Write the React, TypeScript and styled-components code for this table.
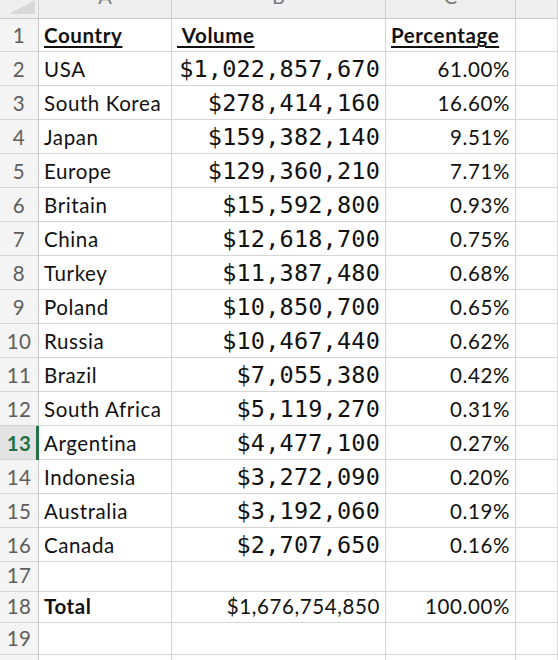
import React from "react";
import styled, { createGlobalStyle, css } from "styled-components";

const Global = createGlobalStyle`
  html, body { margin: 0; padding: 0; background: #fff; }
  body { overflow: hidden; }
`;

const COLS = "39px 133px 214px 130px 1fr";

const Sheet = styled.div`
  width: 558px;
  height: 660px;
  overflow: hidden;
  display: flex;
  flex-direction: column;
  font-family: Lato, "Liberation Sans", sans-serif;
  color: #111;
`;

const Row = styled.div<{ $h: number }>`
  display: grid;
  grid-template-columns: ${COLS};
  height: ${(p) => p.$h}px;
  flex: none;
`;

const Cell = styled.div<{ $align?: "left" | "right" | "center" }>`
  box-sizing: border-box;
  border-right: 1px solid #d5d5d5;
  border-bottom: 1px solid #d5d5d5;
  display: flex;
  align-items: flex-end;
  justify-content: ${(p) =>
    p.$align === "right" ? "flex-end" : p.$align === "center" ? "center" : "flex-start"};
  padding: 0 5px 6px 5px;
  overflow: hidden;
  white-space: nowrap;
  font-size: 20.5px;
  letter-spacing: 0.6px;
  line-height: 20px;
`;

const ColHead = styled.div`
  box-sizing: border-box;
  background: #efefef;
  border-right: 1px solid #cfcfcf;
  border-bottom: 1px solid #c9c9c9;
  display: flex;
  justify-content: center;
  align-items: flex-end;
  overflow: hidden;
  font-size: 20px;
  color: #7a7a7a;
  line-height: 20px;
  padding-bottom: 12px;
`;

const Corner = styled(ColHead)`
  position: relative;
  &::after {
    content: "";
    position: absolute;
    right: 3px;
    top: 0;
    width: 26px;
    height: 14px;
    background: #d8d8d8;
    clip-path: polygon(100% 0, 100% 100%, 0 100%);
  }
`;

const RowHead = styled.div<{ $active?: boolean }>`
  box-sizing: border-box;
  position: relative;
  background: ${(p) => (p.$active ? "#e3e3e3" : "#f4f4f4")};
  border-right: 1px solid #c6c6c6;
  border-bottom: 1px solid #d5d5d5;
  display: flex;
  justify-content: center;
  align-items: flex-end;
  padding-bottom: 6px;
  font-size: 20.5px;
  letter-spacing: 0.4px;
  line-height: 20px;
  color: #5e5e5e;
  ${(p) =>
    p.$active &&
    css`
      color: #217346;
      font-weight: 700;
      &::after {
        content: "";
        position: absolute;
        right: -1px;
        top: 0;
        bottom: -1px;
        width: 3px;
        background: #217346;
      }
    `}
`;

const Heading = styled.span`
  font-weight: 700;
  text-decoration: underline;
  text-decoration-thickness: 2px;
  text-underline-offset: 3px;
  white-space: pre;
`;

const Money = styled.span`
  font-family: "DejaVu Sans Mono", "Liberation Mono", monospace;
  font-size: 23.5px;
  letter-spacing: 0.2px;
`;

const Bold = styled.span`
  font-weight: 700;
`;

type Item = [string, string, string];

const data: Item[] = [
  ["USA", "$1,022,857,670", "61.00%"],
  ["South Korea", "$278,414,160", "16.60%"],
  ["Japan", "$159,382,140", "9.51%"],
  ["Europe", "$129,360,210", "7.71%"],
  ["Britain", "$15,592,800", "0.93%"],
  ["China", "$12,618,700", "0.75%"],
  ["Turkey", "$11,387,480", "0.68%"],
  ["Poland", "$10,850,700", "0.65%"],
  ["Russia", "$10,467,440", "0.62%"],
  ["Brazil", "$7,055,380", "0.42%"],
  ["South Africa", "$5,119,270", "0.31%"],
  ["Argentina", "$4,477,100", "0.27%"],
  ["Indonesia", "$3,272,090", "0.20%"],
  ["Australia", "$3,192,060", "0.19%"],
  ["Canada", "$2,707,650", "0.16%"],
];

export default function App() {
  return (
    <Sheet>
      <Global />
      <Row $h={19}>
        <Corner />
        <ColHead>A</ColHead>
        <ColHead>B</ColHead>
        <ColHead>C</ColHead>
        <ColHead />
      </Row>
      <Row $h={33}>
        <RowHead>1</RowHead>
        <Cell>
          <Heading>Country</Heading>
        </Cell>
        <Cell>
          <Heading>{" Volume"}</Heading>
        </Cell>
        <Cell>
          <Heading>Percentage</Heading>
        </Cell>
        <Cell />
      </Row>
      {data.map(([country, vol, pct], i) => (
        <Row $h={34} key={country}>
          <RowHead $active={i + 2 === 13}>{i + 2}</RowHead>
          <Cell>{country}</Cell>
          <Cell $align="right">
            <Money>{vol}</Money>
          </Cell>
          <Cell $align="right">{pct}</Cell>
          <Cell />
        </Row>
      ))}
      <Row $h={30}>
        <RowHead>17</RowHead>
        <Cell />
        <Cell />
        <Cell />
        <Cell />
      </Row>
      <Row $h={31}>
        <RowHead>18</RowHead>
        <Cell>
          <Bold>Total</Bold>
        </Cell>
        <Cell $align="right">$1,676,754,850</Cell>
        <Cell $align="right">100.00%</Cell>
        <Cell />
      </Row>
      <Row $h={32}>
        <RowHead>19</RowHead>
        <Cell />
        <Cell />
        <Cell />
        <Cell />
      </Row>
      <Row $h={32}>
        <RowHead>20</RowHead>
        <Cell />
        <Cell />
        <Cell />
        <Cell />
      </Row>
    </Sheet>
  );
}
